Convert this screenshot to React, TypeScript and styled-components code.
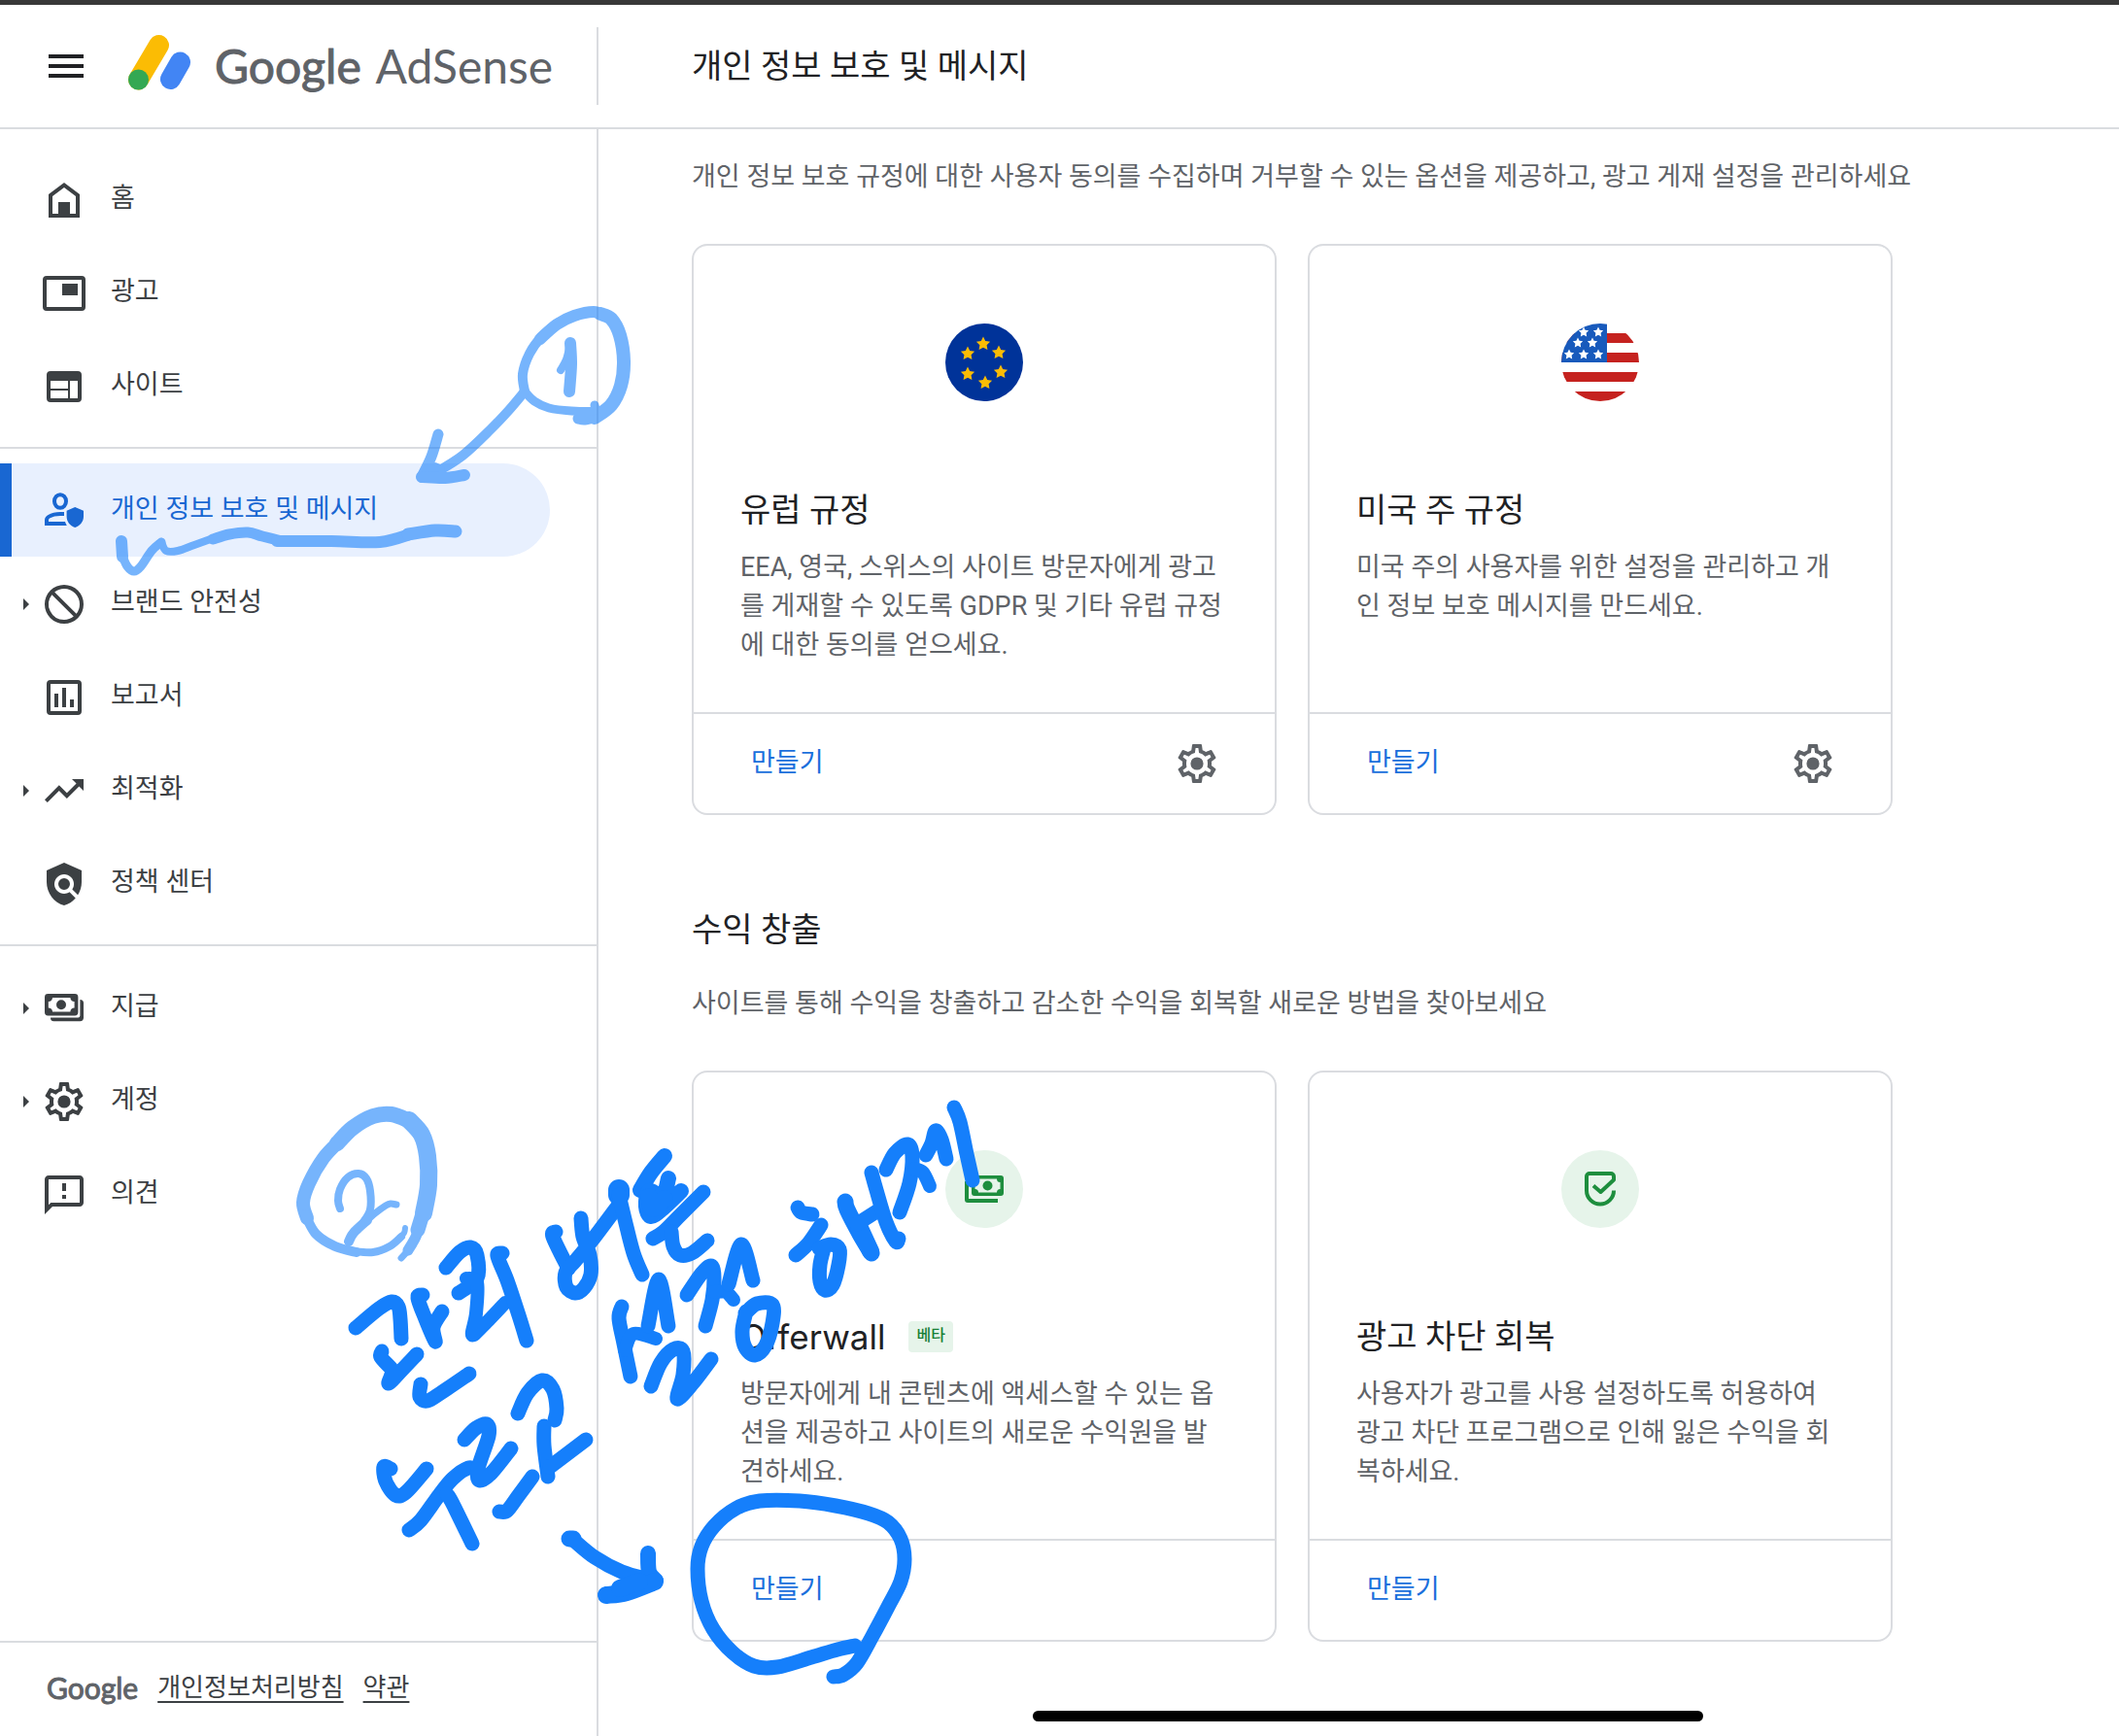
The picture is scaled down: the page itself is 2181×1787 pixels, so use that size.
import React from "react";
import styled, { createGlobalStyle } from "styled-components";

const GlobalStyle = createGlobalStyle`
  *, *::before, *::after { box-sizing: border-box; }
  body {
    margin: 0;
    background: #fff;
    color: #3c4043;
    font-family: Roboto, "Noto Sans CJK KR", sans-serif;
    font-size: 27px;
    line-height: 40px;
  }
  h1, h2, h3, p, ul { margin: 0; padding: 0; font-weight: 400; }
  ul { list-style: none; }
  button { border: 0; background: none; padding: 0; font: inherit; color: inherit; cursor: pointer; }
  a { color: inherit; text-decoration: none; }
  svg { display: block; flex: none; }
`;

const LINE = "#dadce0";

const Page = styled.div`
  position: relative;
  display: flex;
  flex-direction: column;
  min-height: 100vh;
  overflow: hidden;
`;

const Header = styled.header`
  display: grid;
  grid-template-columns: 616px 1fr;
  align-items: center;
  height: 133px;
  border-top: 5px solid #383838;
  border-bottom: 2px solid ${LINE};
`;

const Brand = styled.div`
  display: flex;
  align-items: center;
  height: 80px;
  padding-left: 44px;
  border-right: 2px solid ${LINE};
`;

const MenuButton = styled.button`
  color: #202124;
`;

const BrandLink = styled.a`
  display: flex;
  align-items: center;
  gap: 24px;
  margin-left: 39px;
`;

const Wordmark = styled.span<{ $size: number }>`
  font-family: Lato, "Noto Sans", sans-serif;
  font-size: ${(p) => p.$size}px;
  line-height: 56px;
  color: #5f6368;
  white-space: nowrap;
`;

const Strong = styled.span`
  padding-right: 4px;
  -webkit-text-stroke: 1px currentColor;
`;

const PageTitle = styled.h1`
  padding-left: 96px;
  font-size: 34px;
  line-height: 48px;
  color: #202124;
`;

const Body = styled.div`
  display: grid;
  grid-template-columns: 616px 1fr;
  flex: 1;
`;

const Sidebar = styled.aside`
  display: flex;
  flex-direction: column;
  border-right: 2px solid ${LINE};
`;

const Nav = styled.nav`
  flex: 1;
  padding-top: 24px;
`;

const NavGroup = styled.ul`
  & + & {
    margin-top: 15px;
    padding-top: 15px;
    border-top: 2px solid ${LINE};
  }
`;

const NavLink = styled.a<{ $active?: boolean }>`
  display: flex;
  align-items: center;
  height: 96px;
  margin-right: 48px;
  padding-top: 2px;
  padding-left: ${(p) => (p.$active ? 12 : 24)}px;
  border-left: ${(p) => (p.$active ? "12px solid #1967d2" : "0")};
  border-radius: 0 48px 48px 0;
  background: ${(p) => (p.$active ? "#e8f0fe" : "transparent")};
  color: ${(p) => (p.$active ? "#1967d2" : "#3c4043")};
`;

const Arrow = styled.span<{ $shown?: boolean }>`
  width: 0;
  height: 0;
  margin-right: 12px;
  border: 6px solid transparent;
  border-right-width: 0;
  border-left-color: ${(p) => (p.$shown ? "currentColor" : "transparent")};
`;

const NavText = styled.span`
  padding: 0 0 4px 24px;
`;

const SideFooter = styled.footer`
  display: flex;
  align-items: center;
  height: 98px;
  padding: 0 0 4px 48px;
  border-top: 2px solid ${LINE};
`;

const FooterLinks = styled.div`
  display: flex;
  gap: 20px;
  margin-left: 16px;
`;

const FooterLink = styled.a`
  font-size: 26px;
  text-decoration: underline;
  text-decoration-thickness: 2px;
  text-decoration-skip-ink: none;
  text-underline-offset: 5px;
`;

const Main = styled.main`
  padding: 29px 96px 96px;
  color: #5f6368;
`;

const Section = styled.section`
  & + & { margin-top: 94px; }
`;

const SectionTitle = styled.h2`
  margin-bottom: 32px;
  font-size: 34px;
  line-height: 48px;
  color: #202124;
`;

const Cards = styled.div`
  display: grid;
  grid-template-columns: 1fr 1fr;
  gap: 32px;
  max-width: 1236px;
  margin-top: 49px;
`;

const Card = styled.article`
  display: flex;
  flex-direction: column;
  border: 2px solid ${LINE};
  border-radius: 16px;
`;

const CardBody = styled.div`
  flex: 1;
  padding: 80px 48px 49px;
`;

const Emblem = styled.div<{ $tint?: string }>`
  display: grid;
  place-items: center;
  width: 80px;
  height: 80px;
  margin: 0 auto 88px;
  border-radius: 50%;
  overflow: hidden;
  background: ${(p) => p.$tint ?? "transparent"};
`;

const CardTitle = styled.h3<{ $latin?: boolean }>`
  display: flex;
  align-items: center;
  gap: 24px;
  margin-bottom: 15px;
  font-family: ${(p) => (p.$latin ? "Inter" : "Roboto")}, "Noto Sans CJK KR", sans-serif;
  font-size: ${(p) => (p.$latin ? 35 : 34)}px;
  line-height: 48px;
  color: #202124;
`;

const Badge = styled.span`
  padding: 0 8px 4px;
  border-radius: 4px;
  background: #e6f4ea;
  color: #188038;
  font-size: 16px;
  font-weight: 500;
  line-height: 28px;
`;

const CardText = styled.p`
  min-height: 120px;
`;

const CardFooter = styled.div`
  display: flex;
  align-items: center;
  justify-content: space-between;
  height: 104px;
  padding: 0 56px 0 48px;
  border-top: 2px solid ${LINE};
`;

const CreateButton = styled.button`
  padding: 0 11px 2px;
  color: #1a6fdc;
`;

const IconButton = styled.button`
  color: #5f6368;
`;

const HomeIndicator = styled.div`
  position: absolute;
  left: 1063px;
  bottom: 15px;
  width: 690px;
  height: 11px;
  border-radius: 6px;
  background: #000;
`;

const Ink = styled.svg`
  position: absolute;
  top: 0;
  left: 0;
  pointer-events: none;
`;

const GEAR =
  "M19.43 12.98c.04-.32.07-.64.07-.98 0-.34-.03-.66-.07-.98l2.11-1.65c.19-.15.24-.42.12-.64l-2-3.46c-.09-.16-.26-.25-.44-.25-.06 0-.12.01-.17.03l-2.49 1c-.52-.4-1.08-.73-1.69-.98l-.38-2.65C14.46 2.18 14.25 2 14 2h-4c-.25 0-.46.18-.49.42l-.38 2.65c-.61.25-1.17.59-1.69.98l-2.49-1c-.06-.02-.12-.03-.18-.03-.17 0-.34.09-.43.25l-2 3.46c-.13.22-.07.49.12.64l2.11 1.65c-.04.32-.07.65-.07.98 0 .33.03.66.07.98l-2.11 1.65c-.19.15-.24.42-.12.64l2 3.46c.09.16.26.25.44.25.06 0 .12-.01.17-.03l2.49-1c.52.4 1.08.73 1.69.98l.38 2.65c.03.24.24.42.49.42h4c.25 0 .46-.18.49-.42l.38-2.65c.61-.25 1.17-.59 1.69-.98l2.49 1c.06.02.12.03.18.03.17 0 .34-.09.43-.25l2-3.46c.12-.22.07-.49-.12-.64l-2.11-1.65zm-1.98-1.71c.04.31.05.52.05.73 0 .21-.02.43-.05.73l-.14 1.13.89.7 1.08.84-.7 1.21-1.27-.51-1.04-.42-.9.68c-.43.32-.84.56-1.25.73l-1.06.43-.16 1.13-.2 1.35h-1.4l-.19-1.35-.16-1.13-1.06-.43c-.43-.18-.83-.41-1.23-.71l-.91-.7-1.06.43-1.27.51-.7-1.21 1.08-.84.89-.7-.14-1.13c-.03-.31-.05-.54-.05-.74s.02-.43.05-.73l.14-1.13-.89-.7-1.08-.84.7-1.21 1.27.51 1.04.42.9-.68c.43-.32.84-.56 1.25-.73l1.06-.43.16-1.13.2-1.35h1.39l.19 1.35.16 1.13 1.06.43c.43.18.83.41 1.23.71l.91.7 1.06-.43 1.27-.51.7 1.21-1.07.85-.89.7.14 1.13zM12 8.7a3.3 3.3 0 1 0 0 6.6 3.3 3.3 0 1 0 0-6.6z";

const ICONS = {
  menu: "M3 6h18v2H3zM3 11h18v2H3zM3 16h18v2H3z",
  home: "M4 21V9l8-6 8 6v12H4zm2-2h3v-6h6v6h3v-9l-6-4.5L6 10v9z",
  ads: "M3 3h18a2 2 0 0 1 2 2v14a2 2 0 0 1-2 2H3a2 2 0 0 1-2-2V5a2 2 0 0 1 2-2zm0 2v14h18V5H3zM11 7h8v6h-8z",
  sites: "M5 4h14a2 2 0 0 1 2 2v12a2 2 0 0 1-2 2H5a2 2 0 0 1-2-2V6a2 2 0 0 1 2-2zm0 5v4h9V9H5zm0 5v4h9v-4H5zm10-5v9h4V9h-4z",
  privacy:
    "M10 2.6a4 4.4 0 1 0 0 8.8 4 4.4 0 1 0 0-8.8zm0 2a2 2.4 0 1 1 0 4.8 2 2.4 0 1 1 0-4.8zM2 19.5v-2.8c0-1.1.6-2.1 1.6-2.6 1.9-1.1 4-1.6 6.4-1.6h2v2h-2c-2 0-3.9.4-5.5 1.3-.3.2-.5.5-.5.9v.8h8.5c.2.7.5 1.4.9 2zM17.6 10l4.4 1.9v3c0 2.5-1.8 4.8-4.4 5.6-2.6-.8-4.3-3.1-4.3-5.6v-3z",
  block:
    "M12 2a10 10 0 1 0 0 20 10 10 0 0 0 0-20zM4 12a8 8 0 0 1 8-8c1.85 0 3.55.63 4.9 1.69L5.69 16.9A7.9 7.9 0 0 1 4 12zm8 8a7.9 7.9 0 0 1-4.9-1.69L18.31 7.1A8 8 0 0 1 12 20z",
  report:
    "M5 3h14a2 2 0 0 1 2 2v14a2 2 0 0 1-2 2H5a2 2 0 0 1-2-2V5a2 2 0 0 1 2-2zm0 2v14h14V5H5zM7 10h2v7H7zM11 7h2v10h-2zM15 13h2v4h-2z",
  trend: "M16 6l2.29 2.29-4.88 4.88-4-4L2 16.59 3.41 18l6-6 4 4 6.3-6.29L22 12V6z",
  policy:
    "M21 5l-9-4-9 4v6c0 5.55 3.84 10.74 9 12 2.3-.56 4.33-1.9 5.88-3.71l-3.12-3.12c-1.94 1.29-4.58 1.07-6.29-.64-1.95-1.95-1.95-5.12 0-7.07s5.12-1.95 7.07 0c1.71 1.71 1.92 4.35.64 6.29l2.9 2.9C20.29 15.69 21 13.38 21 11V5zM12 9a3 3 0 1 0 0 6 3 3 0 1 0 0-6z",
  payment:
    "M3.7 4.5h13.8a1.7 1.7 0 0 1 1.7 1.7v7.8a1.7 1.7 0 0 1-1.7 1.7H3.7A1.7 1.7 0 0 1 2 14V6.2a1.7 1.7 0 0 1 1.7-1.7zM6 6.5a2 2 0 0 1-2.1 2v3.2a2 2 0 0 1 2.1 2h9.2a2 2 0 0 1 2.1-2V8.5a2 2 0 0 1-2.1-2zM10.5 7.6a2.5 2.5 0 1 0 0 5 2.5 2.5 0 1 0 0-5zM20.2 7.5a1.8 1.8 0 0 1 1.8 1.8v7.5a1.8 1.8 0 0 1-1.8 1.8H6.7A1.8 1.8 0 0 1 5 16.7h14.2a1 1 0 0 0 1-1z",
  gear: GEAR,
  feedback:
    "M20 2H4c-1.1 0-1.99.9-1.99 2L2 22l4-4h14c1.1 0 2-.9 2-2V4c0-1.1-.9-2-2-2zm0 14H5.17L4 17.17V4h16v12zM11 12h2v2h-2zM11 6h2v4h-2z",
};

type IconName = keyof typeof ICONS;

const Icon = ({ name, flip }: { name: IconName; flip?: boolean }) => (
  <svg width="48" height="48" viewBox="0 0 24 24" fill="currentColor" aria-hidden="true">
    <path fillRule="evenodd" d={ICONS[name]} transform={flip ? "matrix(-1 0 0 1 24 0)" : undefined} />
  </svg>
);

const Logo = () => (
  <svg width="66" height="66" viewBox="0 0 66 66" strokeWidth="21" strokeLinecap="round" aria-hidden="true">
    <path d="M32.5 11.5 11.5 47" stroke="#fbbc04" />
    <path d="M54.5 29 44.5 46.5" stroke="#4285f4" />
    <circle cx="11.5" cy="47" r="10.5" fill="#34a853" />
  </svg>
);

function star(cx: number, cy: number, r: number) {
  return Array.from({ length: 10 }, (_, i) => {
    const a = (Math.PI / 5) * i - Math.PI / 2;
    const d = i % 2 ? r * 0.5 : r;
    return `${(cx + d * Math.cos(a)).toFixed(1)},${(cy + d * Math.sin(a)).toFixed(1)}`;
  }).join(" ");
}

const EU_STARS = [[39, 21], [55, 30], [57, 50], [41, 61], [23, 52], [23, 31]];
const US_STARS = [[23, 9], [38, 9], [17, 20], [32, 20], [8, 32], [23, 32], [38, 32]];

const EuFlag = () => (
  <svg width="80" height="80" viewBox="0 0 80 80" aria-hidden="true">
    <rect width="80" height="80" fill="#003399" />
    {EU_STARS.map(([x, y]) => (
      <polygon key={`${x}-${y}`} points={star(x, y, 7.5)} fill="#fbbc04" />
    ))}
  </svg>
);

const UsFlag = () => (
  <svg width="80" height="80" viewBox="0 0 80 80" aria-hidden="true">
    <path d="M0 10h80v10H0zM0 30h80v10H0zM0 50h80v10H0zM0 70h80v10H0z" fill="#c5221f" />
    <rect width="47" height="40" fill="#185abc" />
    {US_STARS.map(([x, y]) => (
      <polygon key={`${x}-${y}`} points={star(x, y, 5.5)} fill="#fff" />
    ))}
  </svg>
);

const CashIcon = () => (
  <svg width="40" height="28" viewBox="0 0 40 28" fill="#1e8e3e" aria-hidden="true">
    <path
      fillRule="evenodd"
      d="M10 0h27a3 3 0 0 1 3 3v15a3 3 0 0 1-3 3H10a3 3 0 0 1-3-3V3a3 3 0 0 1 3-3zM14 3.5a3.5 3.5 0 0 1-3.5 3.5v7a3.5 3.5 0 0 1 3.5 3.5h19a3.5 3.5 0 0 1 3.5-3.5V7A3.5 3.5 0 0 1 33 3.5z"
    />
    <circle cx="23.5" cy="10.5" r="5" />
    <path d="M0 6h4v18h30v4H3a3 3 0 0 1-3-3z" />
  </svg>
);

const ShieldIcon = () => (
  <svg width="32" height="36" viewBox="0 0 32 36" fill="none" stroke="#1e8e3e" strokeWidth="4" aria-hidden="true">
    <path d="M9 14.5 16.5 21 30 8.5V5a3 3 0 0 0-3-3H5a3 3 0 0 0-3 3v14.5a14 14 0 0 0 28 0" strokeLinejoin="round" />
  </svg>
);

type Stroke = { w: number; p: number[] };

/* Turns a flat list of x,y samples into a smooth pen stroke. */
function smooth(p: number[]) {
  const pts: [number, number][] = [];
  for (let i = 0; i < p.length; i += 2) pts.push([p[i], p[i + 1]]);
  let d = `M${pts[0][0]} ${pts[0][1]}`;
  for (let i = 0; i < pts.length - 1; i++) {
    const a = pts[i - 1] ?? pts[i];
    const b = pts[i];
    const c = pts[i + 1];
    const e = pts[i + 2] ?? c;
    d += `C${b[0] + (c[0] - a[0]) / 6} ${b[1] + (c[1] - a[1]) / 6} ${c[0] - (e[0] - b[0]) / 6} ${c[1] - (e[1] - b[1]) / 6} ${c[0]} ${c[1]}`;
  }
  return d;
}

const SOFT_INK: Stroke[] = [
  { w: 10, p: [540, 403, 538, 385, 545, 364, 558, 346, 575, 332] },
  { w: 12, p: [556, 349, 573, 334, 591, 325, 611, 321, 624, 325] },
  { w: 14, p: [618, 323, 629, 328, 638, 345, 642, 372, 639, 397, 629, 417, 612, 430] },
  { w: 11, p: [614, 429, 602, 432, 595, 431] },
  { w: 9, p: [540, 403, 550, 413, 565, 420, 588, 423, 611, 423, 612, 417] },
  { w: 8, p: [577, 381, 583, 370, 587, 354] },
  { w: 12, p: [587, 353, 588, 375, 586, 403] },
  { w: 10, p: [540, 403, 524, 422, 505, 442, 476, 469, 446, 488] },
  { w: 11, p: [451, 447, 444, 470, 434, 491] },
  { w: 12, p: [434, 491, 444, 482, 452, 484] },
  { w: 12, p: [435, 491, 458, 492, 478, 489] },
  { w: 12, p: [125, 557, 126, 573] },
  { w: 9, p: [126, 572, 131, 583, 138, 588, 145, 583, 156, 567, 166, 558] },
  { w: 8, p: [166, 558, 171, 567, 183, 567, 200, 561, 225, 552] },
  { w: 11, p: [219, 555, 236, 550, 255, 548, 270, 552, 290, 557] },
  { w: 12, p: [285, 557, 341, 557, 391, 558, 425, 549] },
  { w: 13, p: [420, 550, 448, 546, 469, 547] },
  { w: 7, p: [413, 1295, 425, 1282] },
  { w: 11, p: [420, 1287, 428, 1273, 434, 1256] },
  { w: 15, p: [430, 1266, 437, 1243] },
  { w: 18, p: [436, 1249, 441, 1220, 440, 1190, 434, 1168, 421, 1153] },
  { w: 16, p: [422, 1154, 403, 1147, 384, 1149, 363, 1161, 347, 1177] },
  { w: 14, p: [350, 1174, 333, 1192, 318, 1218, 312, 1238, 316, 1254] },
  { w: 10, p: [314, 1250, 325, 1270, 345, 1283, 367, 1289] },
  { w: 8, p: [362, 1288, 384, 1289, 401, 1283, 413, 1273] },
  { w: 6, p: [411, 1275, 416, 1269, 417, 1264] },
  { w: 8, p: [350, 1244, 348, 1236, 350, 1224, 358, 1212, 369, 1208, 377, 1213, 381, 1226, 381, 1245, 374, 1258, 368, 1266] },
  { w: 10, p: [359, 1278, 364, 1269, 378, 1256] },
  { w: 7, p: [375, 1259, 386, 1249, 397, 1241, 402, 1239, 408, 1240] },
];

const FULL_INK: Stroke[] = [
  { w: 15, p: [366, 1367, 390, 1347, 403, 1340, 410, 1345, 412, 1358, 413, 1378] },
  { w: 15, p: [393, 1391, 392, 1397, 402, 1408, 404, 1412, 400, 1424, 411, 1413, 429, 1394] },
  { w: 15, p: [435, 1333, 430, 1336, 438, 1358, 448, 1381, 446, 1366, 455, 1350] },
  { w: 15, p: [433, 1425, 432, 1438, 440, 1442, 455, 1433, 483, 1414] },
  { w: 15, p: [459, 1305, 473, 1289, 484, 1284, 491, 1292, 491, 1316, 472, 1331] },
  { w: 14, p: [480, 1316, 491, 1320, 490, 1352, 486, 1374, 498, 1364, 520, 1341] },
  { w: 15, p: [517, 1290, 512, 1293, 522, 1318, 534, 1354, 542, 1380] },
  { w: 15, p: [572, 1268, 569, 1273, 585, 1306] },
  { w: 15, p: [598, 1254, 600, 1273, 607, 1292, 608, 1312, 601, 1326, 592, 1331, 583, 1325, 582, 1310, 592, 1298, 610, 1276, 637, 1240] },
  { w: 22, p: [637, 1225, 637, 1230] },
  { w: 15, p: [637, 1230, 643, 1255, 652, 1290, 661, 1312] },
  { w: 16, p: [684, 1190, 670, 1207, 659, 1225] },
  { w: 16, p: [688, 1213, 682, 1231, 668, 1226, 665, 1242, 670, 1252, 682, 1244, 701, 1226] },
  { w: 18, p: [668, 1232, 672, 1244, 684, 1234] },
  { w: 15, p: [724, 1227, 700, 1251, 683, 1268, 672, 1275] },
  { w: 15, p: [691, 1268, 693, 1283, 700, 1292, 712, 1290, 728, 1277] },
  { w: 15, p: [640, 1345, 637, 1357, 642, 1383, 649, 1417] },
  { w: 14, p: [675, 1378, 652, 1373, 643, 1390] },
  { w: 15, p: [667, 1365, 678, 1317, 688, 1365] },
  { w: 15, p: [670, 1427, 680, 1403, 693, 1389, 703, 1391, 703, 1415, 697, 1440, 713, 1424, 732, 1399] },
  { w: 15, p: [707, 1333, 722, 1311, 732, 1303, 735, 1315, 733, 1338, 726, 1365] },
  { w: 14, p: [735, 1330, 747, 1330, 755, 1338] },
  { w: 15, p: [750, 1322, 763, 1281, 775, 1318] },
  { w: 15, p: [767, 1352, 779, 1342, 795, 1343, 795, 1362, 788, 1385, 777, 1395, 767, 1387, 764, 1370, 768, 1350] },
  { w: 15, p: [821, 1243, 825, 1248, 836, 1250] },
  { w: 15, p: [845, 1261, 832, 1280, 819, 1292] },
  { w: 15, p: [843, 1285, 855, 1281, 864, 1286, 863, 1302, 857, 1323, 849, 1328, 844, 1319, 844, 1302, 848, 1285] },
  { w: 17, p: [870, 1237, 872, 1245, 885, 1270, 897, 1290] },
  { w: 18, p: [884, 1262, 896, 1288] },
  { w: 15, p: [882, 1260, 907, 1244] },
  { w: 15, p: [897, 1207, 902, 1225, 912, 1258, 922, 1278, 925, 1275] },
  { w: 15, p: [912, 1204, 921, 1187, 934, 1178, 939, 1190, 936, 1218, 926, 1248] },
  { w: 14, p: [941, 1203, 950, 1207, 957, 1221] },
  { w: 15, p: [953, 1189, 959, 1177, 963, 1164, 969, 1173, 974, 1193] },
  { w: 15, p: [982, 1140, 988, 1155, 995, 1188, 1001, 1215] },
  { w: 15, p: [402, 1512, 395, 1510, 397, 1525, 407, 1539, 418, 1536, 439, 1512] },
  { w: 15, p: [421, 1575, 433, 1565, 452, 1539, 466, 1522, 482, 1511, 491, 1513] },
  { w: 15, p: [460, 1538, 466, 1548, 486, 1589] },
  { w: 15, p: [478, 1482, 490, 1470, 501, 1466, 503, 1478, 492, 1512, 494, 1524, 506, 1516, 526, 1491] },
  { w: 15, p: [514, 1556, 522, 1555, 534, 1539, 548, 1520] },
  { w: 15, p: [533, 1455, 543, 1434, 558, 1421, 569, 1430, 573, 1450, 571, 1462] },
  { w: 15, p: [560, 1468, 560, 1488, 564, 1520] },
  { w: 15, p: [566, 1510, 603, 1482] },
  { w: 17, p: [586, 1584, 590, 1584] },
  { w: 15, p: [590, 1585, 612, 1603, 640, 1618, 668, 1626] },
  { w: 16, p: [667, 1599, 668, 1618, 675, 1627] },
  { w: 18, p: [624, 1642, 645, 1639, 674, 1628] },
  { w: 18, p: [638, 1635, 658, 1628] },
  {
    w: 15,
    p: [
      858, 1726, 868, 1724, 882, 1712, 898, 1684, 915, 1652, 927, 1628, 931, 1605, 927, 1584, 914, 1567, 894, 1558, 860, 1550, 823, 1545, 782,
      1545, 757, 1553, 735, 1571, 722, 1592, 718, 1615, 722, 1648, 734, 1677, 754, 1701, 776, 1715, 800, 1716, 835, 1706, 862, 1698, 880, 1694,
    ],
  },
];

const Strokes = ({ items }: { items: Stroke[] }) => (
  <>
    {items.map((s, i) => (
      <path key={i} d={smooth(s.p)} strokeWidth={s.w} />
    ))}
  </>
);

const Annotations = () => (
  <Ink
    width="1100"
    height="1787"
    viewBox="0 0 1100 1787"
    fill="none"
    stroke="#157ffb"
    strokeLinecap="round"
    strokeLinejoin="round"
    role="img"
    aria-label="관리 버튼 누르고 설정 해제"
  >
    <g opacity="0.58">
      <Strokes items={SOFT_INK} />
    </g>
    <Strokes items={FULL_INK} />
  </Ink>
);

type NavItem = { label: string; icon: IconName; arrow?: boolean; active?: boolean; flip?: boolean };

const NAV: NavItem[][] = [
  [
    { label: "홈", icon: "home" },
    { label: "광고", icon: "ads" },
    { label: "사이트", icon: "sites" },
  ],
  [
    { label: "개인 정보 보호 및 메시지", icon: "privacy", active: true },
    { label: "브랜드 안전성", icon: "block", arrow: true, flip: true },
    { label: "보고서", icon: "report" },
    { label: "최적화", icon: "trend", arrow: true },
    { label: "정책 센터", icon: "policy" },
  ],
  [
    { label: "지급", icon: "payment", arrow: true },
    { label: "계정", icon: "gear", arrow: true },
    { label: "의견", icon: "feedback" },
  ],
];

type CardData = {
  title: string;
  text: string;
  emblem: React.ReactNode;
  latin?: boolean;
  tint?: string;
  badge?: string;
  settings?: boolean;
};

const CONSENT: CardData[] = [
  {
    title: "유럽 규정",
    text: "EEA, 영국, 스위스의 사이트 방문자에게 광고를 게재할 수 있도록 GDPR 및 기타 유럽 규정에 대한 동의를 얻으세요.",
    emblem: <EuFlag />,
    settings: true,
  },
  {
    title: "미국 주 규정",
    text: "미국 주의 사용자를 위한 설정을 관리하고 개인 정보 보호 메시지를 만드세요.",
    emblem: <UsFlag />,
    settings: true,
  },
];

const REVENUE: CardData[] = [
  {
    title: "Offerwall",
    text: "방문자에게 내 콘텐츠에 액세스할 수 있는 옵션을 제공하고 사이트의 새로운 수익원을 발견하세요.",
    emblem: <CashIcon />,
    latin: true,
    tint: "#e6f4ea",
    badge: "베타",
  },
  {
    title: "광고 차단 회복",
    text: "사용자가 광고를 사용 설정하도록 허용하여 광고 차단 프로그램으로 인해 잃은 수익을 회복하세요.",
    emblem: <ShieldIcon />,
    tint: "#e6f4ea",
  },
];

const CardList = ({ items }: { items: CardData[] }) => (
  <Cards>
    {items.map((c) => (
      <Card key={c.title}>
        <CardBody>
          <Emblem $tint={c.tint}>{c.emblem}</Emblem>
          <CardTitle $latin={c.latin}>
            {c.title}
            {c.badge && <Badge>{c.badge}</Badge>}
          </CardTitle>
          <CardText>{c.text}</CardText>
        </CardBody>
        <CardFooter>
          <CreateButton type="button">만들기</CreateButton>
          {c.settings && (
            <IconButton type="button" aria-label="설정">
              <Icon name="gear" />
            </IconButton>
          )}
        </CardFooter>
      </Card>
    ))}
  </Cards>
);

export default function App() {
  return (
    <Page lang="ko">
      <GlobalStyle />
      <Header>
        <Brand>
          <MenuButton type="button" aria-label="메뉴">
            <Icon name="menu" />
          </MenuButton>
          <BrandLink href="#">
            <Logo />
            <Wordmark $size={48}>
              <Strong>Google</Strong> AdSense
            </Wordmark>
          </BrandLink>
        </Brand>
        <PageTitle>개인 정보 보호 및 메시지</PageTitle>
      </Header>
      <Body>
        <Sidebar>
          <Nav>
            {NAV.map((group, i) => (
              <NavGroup key={i}>
                {group.map((item) => (
                  <li key={item.label}>
                    <NavLink href="#" $active={item.active} aria-current={item.active ? "page" : undefined}>
                      <Arrow $shown={item.arrow} />
                      <Icon name={item.icon} flip={item.flip} />
                      <NavText>{item.label}</NavText>
                    </NavLink>
                  </li>
                ))}
              </NavGroup>
            ))}
          </Nav>
          <SideFooter>
            <Wordmark $size={30}>
              <Strong>Google</Strong>
            </Wordmark>
            <FooterLinks>
              <FooterLink href="#">개인정보처리방침</FooterLink>
              <FooterLink href="#">약관</FooterLink>
            </FooterLinks>
          </SideFooter>
        </Sidebar>
        <Main>
          <Section>
            <p>개인 정보 보호 규정에 대한 사용자 동의를 수집하며 거부할 수 있는 옵션을 제공하고, 광고 게재 설정을 관리하세요</p>
            <CardList items={CONSENT} />
          </Section>
          <Section>
            <SectionTitle>수익 창출</SectionTitle>
            <p>사이트를 통해 수익을 창출하고 감소한 수익을 회복할 새로운 방법을 찾아보세요</p>
            <CardList items={REVENUE} />
          </Section>
        </Main>
      </Body>
      <HomeIndicator />
      <Annotations />
    </Page>
  );
}
